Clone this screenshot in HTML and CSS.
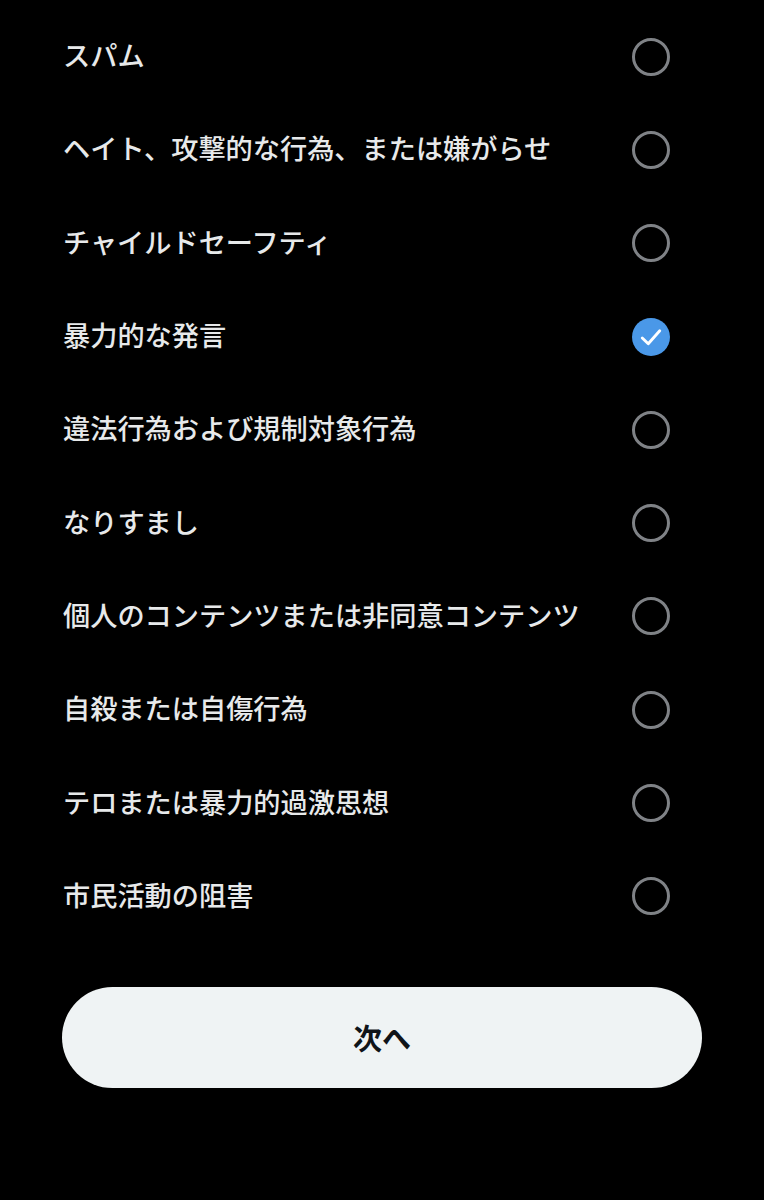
FILE: index.html
```html
<!DOCTYPE html>
<html lang="ja">

<head>
    <meta charset="UTF-8">
    <meta name="viewport" content="width=device-width, initial-scale=1.0">
    <title>報告</title>
    <link rel="stylesheet" href="styles.css">
</head>

<body>
    <div class="report">
        <ul class="options">
            <li class="option"><span>スパム</span><i class="radio"></i></li>
            <li class="option"><span>ヘイト、攻撃的な行為、または嫌がらせ</span><i class="radio"></i></li>
            <li class="option"><span>チャイルドセーフティ</span><i class="radio"></i></li>
            <li class="option"><span>暴力的な発言</span>
                <i class="radio checked">
                    <svg viewBox="0 0 24 24" width="30" height="30"><path d="M5 12.8l4.8 4.6L19 7" fill="none" stroke="#fff" stroke-width="2.3" stroke-linecap="round" stroke-linejoin="round"/></svg>
                </i>
            </li>
            <li class="option"><span>違法行為および規制対象行為</span><i class="radio"></i></li>
            <li class="option"><span>なりすまし</span><i class="radio"></i></li>
            <li class="option"><span>個人のコンテンツまたは非同意コンテンツ</span><i class="radio"></i></li>
            <li class="option"><span>自殺または自傷行為</span><i class="radio"></i></li>
            <li class="option"><span>テロまたは暴力的過激思想</span><i class="radio"></i></li>
            <li class="option"><span>市民活動の阻害</span><i class="radio"></i></li>
        </ul>

        <button class="next">次へ</button>
    </div>
</body>

</html>
```

FILE: styles.css
```css
body {
    margin: 0;
    background-color: #000;
    font-family: "Noto Sans CJK JP", "Noto Sans", sans-serif;
    color: #e7e9ea;
}

.report {
    padding: 10px 62px 0 62px;
}

.options {
    list-style: none;
    margin: 0;
    padding: 0;
}

.option {
    height: 93.3px;
    display: flex;
    align-items: center;
    justify-content: space-between;
    padding: 0 32px 0 1px;
    font-size: 27.2px;
    font-weight: 500;
}

.option span {
    padding-bottom: 5px;
}

.radio {
    width: 38px;
    height: 38px;
    box-sizing: border-box;
    border: 3px solid #7f8286;
    border-radius: 50%;
    display: flex;
    align-items: center;
    justify-content: center;
}

.radio.checked {
    border: none;
    background-color: #4a98e8;
}

.next {
    display: block;
    width: 100%;
    height: 101px;
    margin-top: 44px;
    border: none;
    border-radius: 51px;
    background-color: #eff3f4;
    color: #0f1419;
    font-family: "Noto Sans CJK JP", sans-serif;
    font-size: 29px;
    font-weight: 700;
}
```
